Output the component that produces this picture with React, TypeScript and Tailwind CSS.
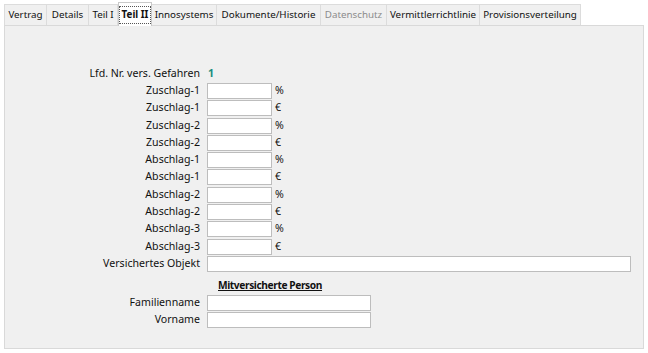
import React from "react";

const tabs = [
  { label: "Vertrag", w: "w-[43px]" },
  { label: "Details", w: "w-[42px]" },
  { label: "Teil I", w: "w-[29px]" },
  { label: "Teil II", w: "w-[34px]", active: true },
  { label: "Innosystems", w: "w-[65px]" },
  { label: "Dokumente/Historie", w: "w-[104px]" },
  { label: "Datenschutz", w: "w-[66px]", disabled: true },
  { label: "Vermittlerrichtlinie", w: "w-[93px]" },
  { label: "Provisionsverteilung", w: "w-[101px]" },
];

const smallRows: [string, string][] = [
  ["Zuschlag-1", "%"],
  ["Zuschlag-1", "€"],
  ["Zuschlag-2", "%"],
  ["Zuschlag-2", "€"],
  ["Abschlag-1", "%"],
  ["Abschlag-1", "€"],
  ["Abschlag-2", "%"],
  ["Abschlag-2", "€"],
  ["Abschlag-3", "%"],
  ["Abschlag-3", "€"],
];

function Row({ label, children }: { label: string; children?: React.ReactNode }) {
  return (
    <div className="flex h-[17.3px] items-center">
      <div className="w-[196px] shrink-0 pr-[1px] text-right whitespace-nowrap">{label}</div>
      <div className="ml-[6px] flex items-center">{children}</div>
    </div>
  );
}

function Box({ className }: { className: string }) {
  return <div className={`h-[16px] border border-[#bdbdbd] bg-white ${className}`} />;
}

export default function App() {
  return (
    <div
      className="h-[353px] w-[648px] bg-white text-[10.6px] text-[#111]"
      style={{ fontFamily: '"Noto Sans", "Open Sans", sans-serif' }}
    >
      {/* Tabs */}
      <div className="flex h-[25px] items-end pl-[4px] text-[9.8px]">
        {tabs.map((t) =>
          t.active ? (
            <div
              key={t.label}
              className={`relative z-10 -mb-[1px] flex h-[24px] shrink-0 items-center justify-center border border-b-0 border-[#c9c9c9] bg-white whitespace-nowrap ${t.w}`}
            >
              <span className="border border-dotted border-[#555] px-[2px] font-bold leading-[16px]">
                {t.label}
              </span>
            </div>
          ) : (
            <div
              key={t.label}
              className={`flex h-[21px] shrink-0 items-center justify-center border-t border-r border-[#dcdcdc] bg-[#f0f0f0] whitespace-nowrap first:border-l ${t.w} ${
                t.disabled ? "text-[#8c8c8c]" : ""
              }`}
            >
              {t.label}
            </div>
          )
        )}
      </div>

      {/* Panel */}
      <div className="mx-[4px] h-[324px] border border-[#d9d9d9] bg-[#f0f0f0] pt-[39px]">
        <Row label="Lfd. Nr. vers. Gefahren">
          <span className="ml-[1px] font-bold text-[#1a8c7e]">1</span>
        </Row>
        {smallRows.map(([l, u], i) => (
          <Row key={i} label={l}>
            <Box className="w-[65px]" />
            <span className="ml-[3px]">{u}</span>
          </Row>
        ))}
        <Row label="Versichertes Objekt">
          <Box className="w-[424px]" />
        </Row>
        <div className="mt-[4px] flex h-[17.3px] items-center">
          <span className="ml-[213px] text-[10.2px] font-bold tracking-[-0.4px] underline">
            Mitversicherte Person
          </span>
        </div>
        <Row label="Familienname">
          <Box className="w-[164px]" />
        </Row>
        <Row label="Vorname">
          <Box className="w-[164px]" />
        </Row>
      </div>
    </div>
  );
}
